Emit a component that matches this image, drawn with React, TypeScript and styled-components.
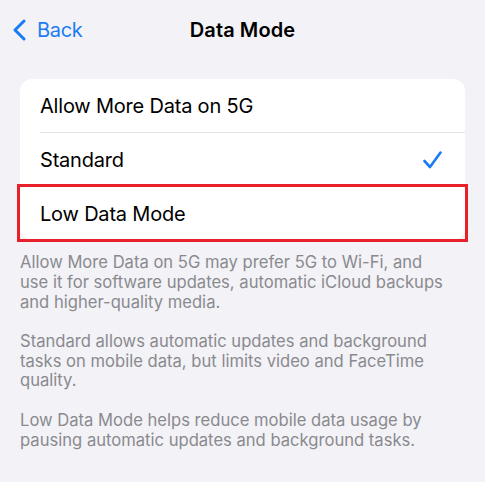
import React from "react";
import styled, { createGlobalStyle } from "styled-components";

const GlobalStyle = createGlobalStyle`
  html, body {
    margin: 0;
    padding: 0;
    background: #f2f2f7;
  }
  body {
    font-family: Inter, "Noto Sans", "Liberation Sans", sans-serif;
    -webkit-font-smoothing: antialiased;
  }
`;

const Screen = styled.div`
  width: 485px;
  min-height: 482px;
  background: #f2f2f7;
  display: flex;
  flex-direction: column;
`;

const NavBar = styled.header`
  height: 60px;
  display: grid;
  grid-template-columns: 1fr auto 1fr;
  align-items: center;
  padding: 0 12px;
`;

const BackButton = styled.button`
  justify-self: start;
  display: flex;
  align-items: center;
  gap: 11px;
  background: none;
  border: 0;
  padding: 0;
  color: #1a7cf5;
  font-family: inherit;
  font-size: 20px;
  letter-spacing: -0.3px;
  cursor: pointer;
`;

const Title = styled.h1`
  margin: 0;
  font-size: 20px;
  font-weight: 600;
  letter-spacing: 0.1px;
  color: #000;
`;

const Content = styled.main`
  padding: 19px 20px 0;
`;

const Card = styled.ul`
  list-style: none;
  margin: 0;
  padding: 0;
  background: #fff;
  border-radius: 12px;
`;

const Row = styled.li<{ $last?: boolean }>`
  position: relative;
  height: 53px;
  display: flex;
  align-items: center;
  justify-content: space-between;
  padding: 0 23px 0 20px;
  font-size: 20px;
  letter-spacing: -0.2px;
  color: #000;
  ${({ $last }) =>
    !$last &&
    `
    margin-bottom: 1px;
    &::after {
      content: "";
      position: absolute;
      left: 20px;
      right: 0;
      bottom: -1px;
      height: 1px;
      background: #e4e4e8;
    }
  `}
`;

const Highlight = styled.span`
  position: absolute;
  top: -3px;
  left: -3px;
  right: -3px;
  bottom: -2px;
  border: 3px solid #e8202a;
  pointer-events: none;
`;

const Footer = styled.div`
  padding: 13px 20px 0;
  color: #8a8a8e;
  font-size: 16.6px;
  line-height: 19.8px;
`;

const Note = styled.p`
  margin: 0 0 19.5px;
`;

const Chevron = () => (
  <svg width="14" height="22" viewBox="0 0 14 22" fill="none">
    <path
      d="M12 2 L3 11 L12 20"
      stroke="#1a7cf5"
      strokeWidth="3"
      strokeLinecap="round"
      strokeLinejoin="round"
    />
  </svg>
);

const Check = () => (
  <svg width="19" height="18" viewBox="0 0 19 18" fill="none">
    <path
      d="M1.5 10 L7 16 L17.5 1.5"
      stroke="#1a7cf5"
      strokeWidth="2.6"
      strokeLinecap="round"
      strokeLinejoin="round"
    />
  </svg>
);

const options = [
  { label: "Allow More Data on 5G", selected: false, highlight: false },
  { label: "Standard", selected: true, highlight: false },
  { label: "Low Data Mode", selected: false, highlight: true },
];

export default function App() {
  return (
    <>
      <GlobalStyle />
      <Screen>
        <NavBar>
          <BackButton>
            <Chevron />
            Back
          </BackButton>
          <Title>Data Mode</Title>
          <span />
        </NavBar>
        <Content>
          <Card>
            {options.map((o, i) => (
              <Row key={o.label} $last={i === options.length - 1}>
                {o.label}
                {o.selected && <Check />}
                {o.highlight && <Highlight />}
              </Row>
            ))}
          </Card>
        </Content>
        <Footer>
          <Note>
            Allow More Data on 5G may prefer 5G to Wi-Fi, and
            <br />
            use it for software updates, automatic iCloud backups
            <br />
            and higher-quality media.
          </Note>
          <Note>
            Standard allows automatic updates and background
            <br />
            tasks on mobile data, but limits video and FaceTime
            <br />
            quality.
          </Note>
          <Note>
            Low Data Mode helps reduce mobile data usage by
            <br />
            pausing automatic updates and background tasks.
          </Note>
        </Footer>
      </Screen>
    </>
  );
}
